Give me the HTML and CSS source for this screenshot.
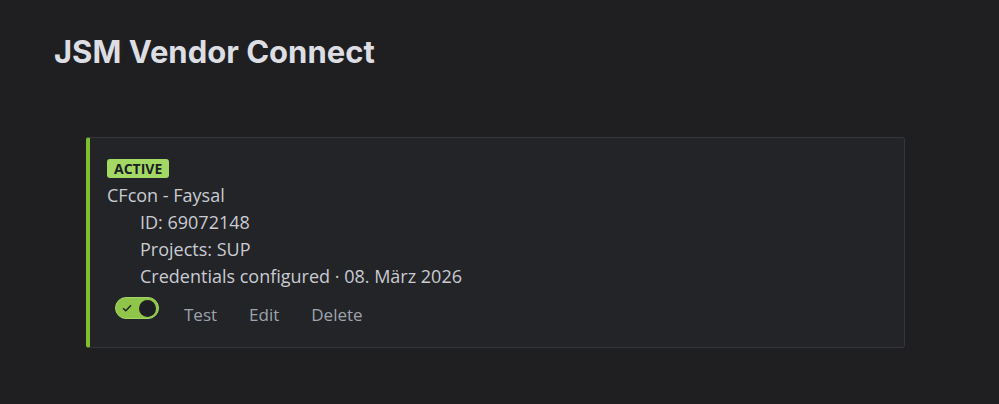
FILE: index.html
```html
<!DOCTYPE html>
<html lang="de">
<head>
<meta charset="utf-8">
<title>JSM Vendor Connect</title>
<link rel="stylesheet" href="styles.css">
</head>
<body>
<main class="page">
  <h1 class="title">JSM Vendor Connect</h1>
  <section class="card">
    <div class="badge-row"><span class="badge">ACTIVE</span></div>
    <div class="name">CFcon - Faysal</div>
    <div class="details">
      <div class="line">ID: 69072148</div>
      <div class="line">Projects: SUP</div>
      <div class="line">Credentials configured · 08. März 2026</div>
    </div>
    <div class="actions">
      <span class="toggle" role="switch" aria-checked="true">
        <svg class="check" width="10" height="8" viewBox="0 0 10 8"><path d="M1 4.2 L3.8 6.8 L9 1.2" fill="none" stroke="#1d2125" stroke-width="1.4"/></svg>
        <span class="knob"></span>
      </span>
      <button class="btn">Test</button>
      <button class="btn">Edit</button>
      <button class="btn">Delete</button>
    </div>
  </section>
</main>
</body>
</html>
```
FILE: styles.css
```css
html, body {
  margin: 0;
  padding: 0;
  background: #1f1f21;
}
.page {
  padding: 32px 94px 0 54px;
}
.title {
  margin: 0;
  font-family: "Inter", "Liberation Sans", sans-serif;
  font-weight: 700;
  font-size: 31px;
  line-height: 40px;
  color: #dcdee3;
}
.card {
  margin: 65px 0 0 32px;
  background: #232428;
  border: 1px solid #34363b;
  border-left: 4px solid #7fbe2e;
  border-radius: 3px;
  padding: 21px 17px 14px 17px;
  font-family: "Open Sans", sans-serif;
  color: #c9cbd1;
  font-size: 18px;
}
.badge-row {
  display: flex;
  margin-bottom: 4px;
}
.badge {
  display: block;
  background: #a4d865;
  color: #1a1d21;
  font-weight: 700;
  font-size: 14px;
  line-height: 19px;
  padding: 0 7px;
  border-radius: 3px;
}
.name {
  line-height: 27px;
}
.details {
  padding-left: 33px;
}
.line {
  line-height: 27px;
}
.actions {
  display: flex;
  align-items: flex-start;
  margin-top: 7px;
}
.toggle {
  display: flex;
  align-items: center;
  justify-content: space-between;
  box-sizing: border-box;
  width: 44px;
  height: 22px;
  padding: 0 2px 0 6px;
  background: #8fc64a;
  border: 1px solid #a3d466;
  border-radius: 11px;
  margin-left: 8px;
}
.knob {
  width: 17px;
  height: 17px;
  border-radius: 50%;
  background: #1d1f22;
}
.btn {
  font-family: "Open Sans", sans-serif;
  font-size: 17px;
  line-height: 24px;
  color: #9ea3ad;
  background: none;
  border: 0;
  padding: 6px 16px;
}
.toggle + .btn {
  margin-left: 9px;
}
```
